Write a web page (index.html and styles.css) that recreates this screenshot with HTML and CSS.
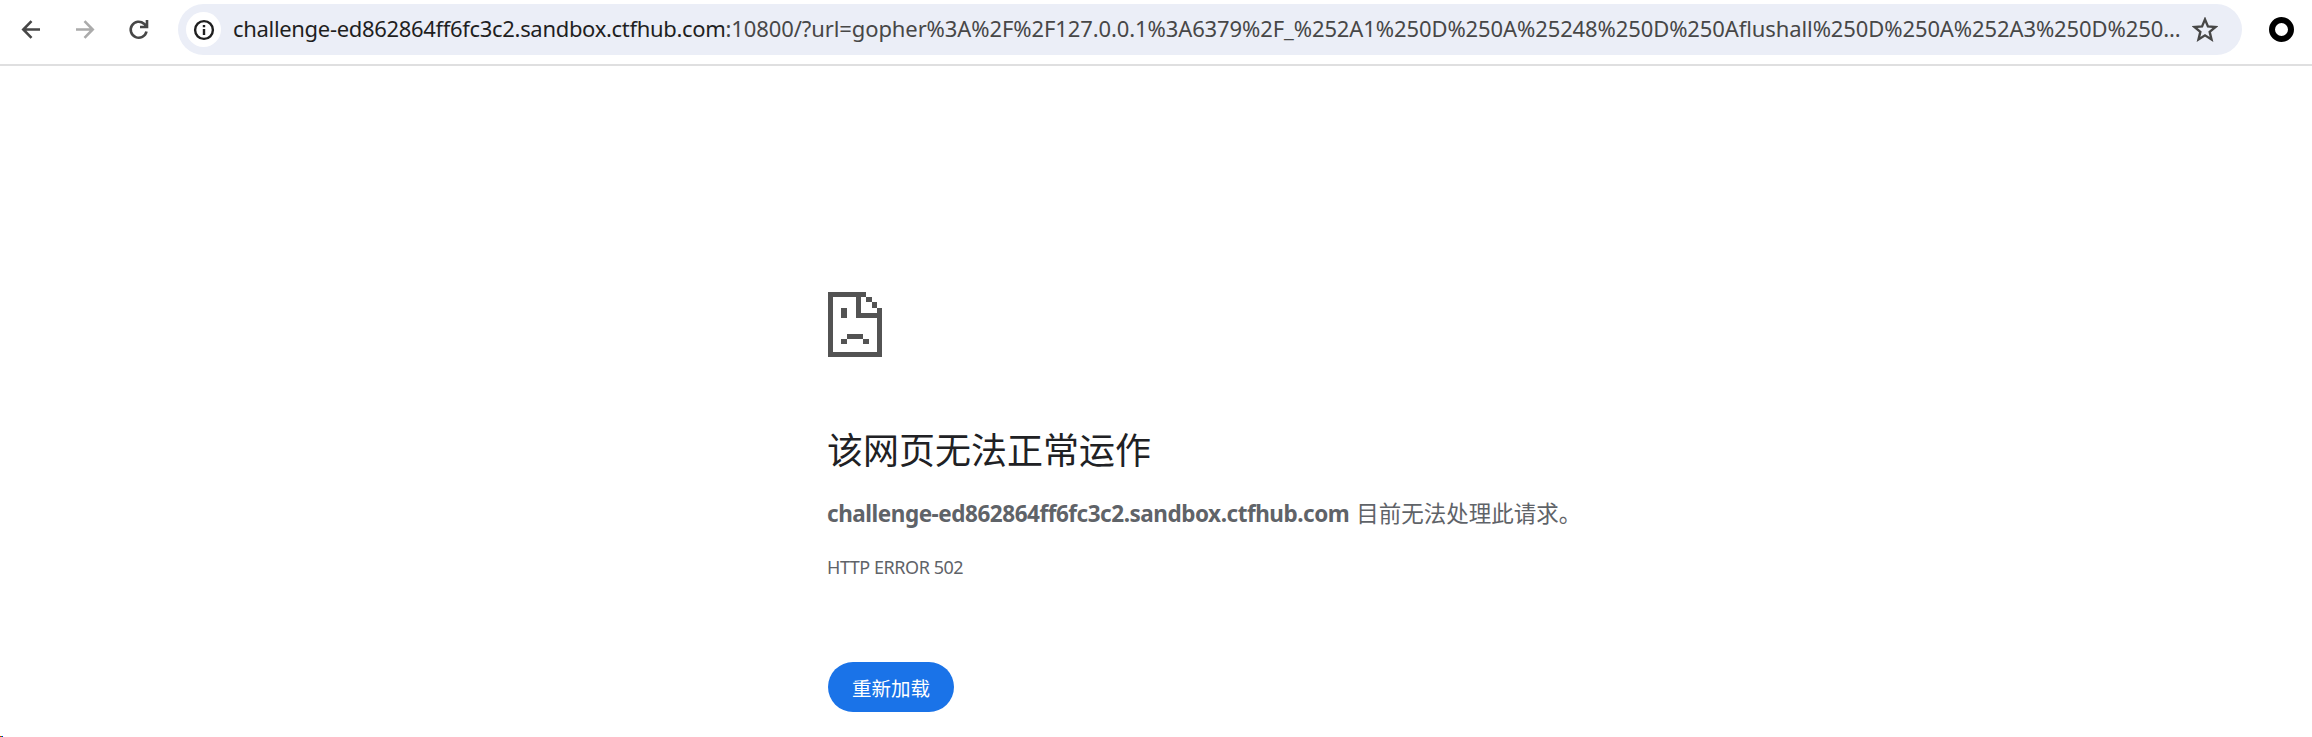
FILE: index.html
```html
<!DOCTYPE html>
<html lang="zh-CN">
<head>
<meta charset="utf-8">
<title>challenge-ed862864ff6fc3c2.sandbox.ctfhub.com</title>
<link rel="stylesheet" href="styles.css">
</head>
<body>
<header class="toolbar">
  <nav class="nav">
    <svg class="icon" viewBox="0 0 36 36"><path d="M27 17.500H11M18.500 9.200l-8.200 8.300 8.200 8.300"/></svg>
    <svg class="icon icon-disabled" viewBox="0 0 36 36"><path d="M9 17.500h16M17.500 9.200l8.200 8.300-8.200 8.300"/></svg>
    <svg class="icon" viewBox="0 0 36 36"><path d="M25.500 19.500A8 8 0 1 1 23 11.700L26 14.800M26 8v7h-7"/></svg>
  </nav>
  <div class="omnibox">
    <span class="site-info">
      <svg class="info" viewBox="0 0 22 22"><circle cx="11" cy="11" r="8.900"/><path d="M11 10v6M11 6v2.300"/></svg>
    </span>
    <div class="url"><span class="host">challenge-ed862864ff6fc3c2.sandbox.ctfhub.com</span><span class="path">:10800/?url=gopher%3A%2F%2F127.0.0.1%3A6379%2F_%252A1%250D%250A%25248%250D%250Aflushall%250D%250A%252A3%250D%250...</span></div>
    <svg class="star" viewBox="0 0 24 24"><path d="M12 2.200l2.700 6.500 7 .5-5.400 4.500 1.700 7-6-3.800-6 3.800 1.700-7-5.400-4.500 7-.5z"/></svg>
  </div>
  <span class="extension"></span>
</header>
<main class="error">
  <svg class="sad-page" viewBox="0 0 162 195" shape-rendering="crispEdges">
    <path d="M0 0H114V16H99V63H147V48H162V195H0ZM15 16V180H147V78H84V16ZM39 47H56V78H39ZM57 126H105V141H57ZM39 141H56V156H39ZM105 141H122V156H105ZM114 16H131V31H114ZM131 31H147V48H131Z" fill-rule="evenodd"/>
  </svg>
  <h1 class="title">该网页无法正常运作</h1>
  <p class="summary"><strong class="summary-host">challenge-ed862864ff6fc3c2.sandbox.ctfhub.com</strong><span class="summary-text">目前无法处理此请求。</span></p>
  <p class="code">HTTP ERROR 502</p>
  <button class="reload" type="button">重新加载</button>
</main>
<i class="corner"></i>
</body>
</html>
```
FILE: styles.css
```css
* { box-sizing: border-box; }
body {
  position: relative;
  margin: 0;
  height: 737px;
  overflow: hidden;
  background: #fff;
  font-family: "Noto Sans", "Noto Sans CJK SC", sans-serif;
}
.toolbar {
  display: flex;
  align-items: flex-start;
  height: 66px;
  padding-top: 4px;
  border-bottom: 2px solid #dfdfe0;
}
.nav {
  display: flex;
  gap: 18px;
  width: 178px;
  padding: 8px 0 0 13px;
}
.icon {
  width: 36px;
  height: 36px;
  fill: none;
  stroke: #474747;
  stroke-width: 2.6;
}
.icon-disabled { stroke: #ababab; }
.omnibox {
  display: flex;
  align-items: center;
  width: 2064px;
  height: 51px;
  padding-left: 8px;
  border-radius: 26px;
  background: #ebeef7;
}
.site-info {
  display: flex;
  align-items: center;
  justify-content: center;
  width: 35px;
  height: 35px;
  border-radius: 50%;
  background: #fff;
}
.info {
  width: 22px;
  height: 22px;
  fill: none;
  stroke: #1f1f1f;
  stroke-width: 2.4;
}
.url {
  flex: none;
  width: 1959px;
  height: 51px;
  margin-left: 12px;
  font-size: 22px;
  line-height: 48px;
  white-space: nowrap;
}
.host {
  color: #1f1f1f;
  letter-spacing: -0.32px;
}
.path {
  color: #474747;
  letter-spacing: -0.1px;
}
.star {
  width: 26px;
  height: 26px;
  fill: none;
  stroke: #474747;
  stroke-width: 2.2;
}
.extension {
  width: 25px;
  height: 25px;
  margin: 13px 0 0 27px;
  border: 6px solid #000;
  border-radius: 50%;
}
.error {
  display: flex;
  flex-direction: column;
  align-items: flex-start;
  padding: 226px 0 0 828px;
  color: #5f6368;
}
.sad-page {
  width: 54px;
  height: 65px;
  fill: #535353;
}
.title {
  margin: 69px 0 0 -1px;
  color: #202124;
  font-size: 36px;
  font-weight: 400;
  line-height: 44px;
  font-family: "Noto Sans CJK SC", sans-serif;
}
.summary {
  display: flex;
  margin: 26px 0 0 -1px;
  font-size: 22.5px;
  line-height: 36px;
  white-space: nowrap;
}
.summary-host { letter-spacing: -0.47px; }
.summary-text { margin-left: 7px; }
.code {
  margin: 23px 0 0 -1px;
  font-size: 18px;
  line-height: 24px;
  letter-spacing: -0.45px;
}
.reload {
  width: 126px;
  height: 50px;
  margin-top: 83px;
  padding: 0;
  border: 0;
  border-radius: 25px;
  background: #1a73e8;
  color: #fff;
  font: 19.5px "Noto Sans CJK SC", sans-serif;
}
/* Tiny tri-colour mark over the page's bottom-left corner */
.corner {
  position: absolute;
  left: 0;
  bottom: 0;
  width: 3px;
  height: 1px;
  background: linear-gradient(90deg, #f00 33.3%, #0c0 33.3% 66.6%, #00f 66.6%);
}
```
